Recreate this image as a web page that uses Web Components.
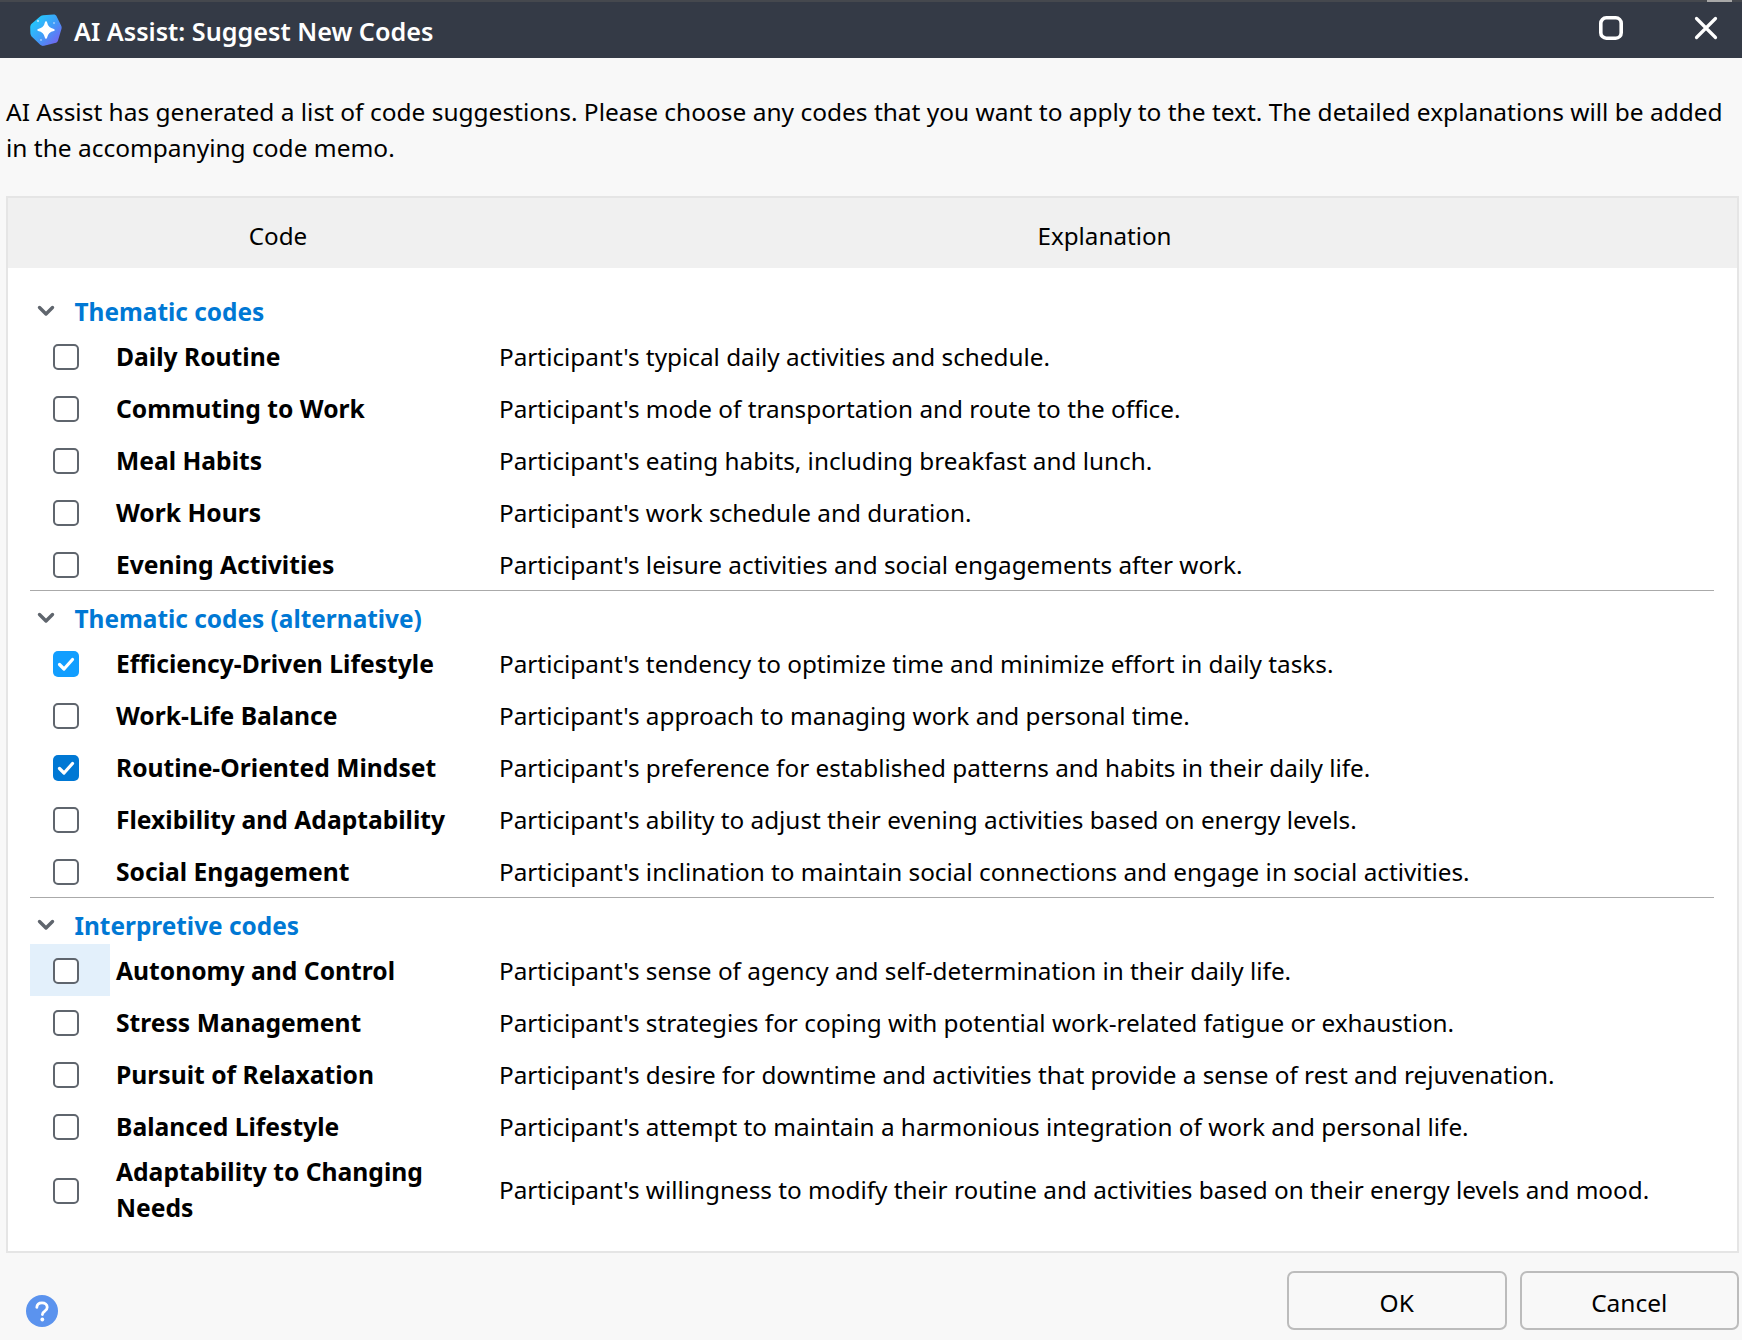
<!DOCTYPE html>
<html lang="en"><head><meta charset="utf-8"><title>AI Assist: Suggest New Codes</title>
<style>html,body{margin:0;padding:0;background:#f8f8f8}body{font:24.47px/36px "Noto Sans","Liberation Sans",sans-serif;color:#000}</style>
</head><body>
<template id="t-dialog"><style>
:host{display:flex;flex-direction:column;width:1742px;height:1340px;overflow:hidden;background:#f8f8f8}
.intro{padding:35.5px 0 0 6px;width:1730px;height:138px;box-sizing:border-box}
.foot{display:flex;align-items:flex-start;justify-content:space-between;padding:18px 3px 0 26px}
.btns{display:flex;gap:13px}
.help{width:32px;height:32px;margin-top:24px;flex:none}
</style>
<slot name="title"></slot>
<div class="intro"><slot name="intro"></slot></div>
<slot></slot>
<div class="foot"><svg class="help" viewBox="0 0 32 32"><circle cx="16" cy="16" r="16" fill="#5b93ee"/><path d="M10.800 12.300c.2-3 2.400-4.400 5.200-4.400 3 0 5.200 1.600 5.200 4.300 0 2-1 3-2.500 4-1.600 1-2.300 1.700-2.300 3.400" fill="none" stroke="#fff" stroke-width="2.800" stroke-linecap="round"/><circle cx="16.300" cy="24.500" r="1.900" fill="#fff"/></svg><div class="btns"><slot name="buttons"></slot></div></div>
</template>

<template id="t-titlebar"><style>
:host{display:flex;align-items:center;height:58px;box-sizing:border-box;flex:none;background:#343a46;border-top:2px solid #45484e;color:#fff;padding-left:30px;position:relative}
:host::after{content:"";position:absolute;top:-2px;right:10px;width:25px;height:2px;background:#a8a8a8}
.ic{width:32px;height:32px;flex:none;margin-right:12px}
.t{font-weight:600;font-size:25.2px;line-height:32px;flex:1;position:relative;top:1px}
.ctl{display:flex;align-items:center;gap:70.5px;margin-right:24.5px}
.ctl svg{position:relative;top:-2px}
</style>
<svg class="ic" viewBox="0 0 32 32"><defs><linearGradient id="g" x1=".05" y1=".1" x2=".95" y2=".95"><stop offset="0" stop-color="#1fd0fc"/><stop offset=".5" stop-color="#3e9ef8"/><stop offset="1" stop-color="#7b5bef"/></linearGradient></defs><path d="M13 1.200 23.500 .6c1.500 0 2.500.6 3.200 1.800l4.400 9c.7 1.300.7 2.600.2 4l-3.300 11c-.5 1.500-1.500 2.300-3 2.700l-11 2.700c-1.400.3-2.700 0-3.800-1L2.400 23.300C1.200 22.200.6 21 .4 19.500L.2 13.500c0-1.500.4-2.700 1.400-3.800L9.500 3c1-1 2.200-1.600 3.500-1.800z" fill="url(#g)"/><path d="M16 8.300c.9 4.700 2.900 6.800 7.700 7.700-4.800.9-6.800 3-7.700 7.700-.9-4.700-2.900-6.800-7.700-7.700 4.800-.9 6.800-3 7.700-7.700z" fill="#fff" stroke="#fff" stroke-width="2" stroke-linejoin="round"/><circle cx="8" cy="7" r=".9" fill="#d8f3ff"/><circle cx="24" cy="9" r=".7" fill="#fff"/><circle cx="11" cy="26" r=".7" fill="#fff"/></svg>
<div class="t"><slot></slot></div>
<div class="ctl"><svg width="24" height="24" viewBox="0 0 24 24"><rect x="1.800" y="1.800" width="20.400" height="20.400" rx="5.500" fill="none" stroke="#fff" stroke-width="3.600"/></svg><svg width="24" height="24" viewBox="0 0 24 24"><path d="M2.500 2.500 21.500 21.500M21.500 2.500 2.500 21.500" stroke="#fff" stroke-width="3.200" stroke-linecap="round"/></svg></div>
</template>

<template id="t-table"><style>
:host{display:block;margin:0 3px 0 6px;box-sizing:border-box;height:1057px;flex:none;background:#fff;border:2px solid #e5e5e5}
.h{display:grid;grid-template-columns:540px 1fr;height:70px;background:#f0f0f0;align-items:center;text-align:center;font-size:24.2px}
.h span{padding-top:6px}
.h span:last-child{padding-right:76px}
.b{padding:16px 23px 0 22px}
</style><div class="h"><span>Code</span><span>Explanation</span></div><div class="b"><slot></slot></div></template>

<template id="t-group"><style>
:host{display:block;border-bottom:1px solid #aaa}
:host([last]){border-bottom:0}
.g{display:flex;align-items:center;height:46px;box-sizing:border-box;padding-top:8px}
svg{width:18px;height:12px;margin:0 19.500px 0 7px;flex:none}
.n{color:#0078d4;font-weight:700;font-size:24.4px;line-height:34px;padding-top:2px}
</style><div class="g"><svg viewBox="0 0 18 12"><path d="M2.500 2.500 9 9 15.500 2.500" fill="none" stroke="#5f656d" stroke-width="3.400" stroke-linecap="round" stroke-linejoin="round"/></svg><span class="n"><slot name="name"></slot></span></div><slot></slot></template>

<template id="t-row"><style>
:host{display:grid;grid-template-columns:80px 389px 1fr;min-height:52px;align-items:center;font-size:24.3px}
.c{display:flex;align-self:stretch;align-items:center;justify-content:center;padding:2px 8px 0 0;box-sizing:border-box}
:host([hl]) .c{background:#e3f0fb}
.n{font-weight:700;font-size:24.65px;padding:1px 0 0 6px;line-height:36px}
.e{white-space:nowrap;padding-top:1px}
:host([tall]) .n{padding-top:2px}
:host([tall]) .c{padding-top:3px}
</style><div class="c"><code-check></code-check></div><div class="n"><slot name="name"></slot></div><div class="e"><slot></slot></div></template>

<template id="t-check"><style>
:host{display:block;width:26px;height:26px;box-sizing:border-box;border:2px solid #5f656d;border-radius:5px;background:#fff}
:host([on]){border:0;background:#0078d4}
:host([on="hover"]){background:#129eff}
svg{display:none;width:26px;height:26px}
:host([on]) svg{display:block}
</style><svg viewBox="0 0 26 26"><path d="M6.500 13.500 11 18 19.500 8.500" fill="none" stroke="#fff" stroke-width="3.200" stroke-linecap="round" stroke-linejoin="round"/></svg></template>

<template id="t-btn"><style>
:host{display:flex;align-items:center;justify-content:center;width:219.500px;height:59px;box-sizing:border-box;border:2px solid #bcbcbc;border-radius:7px;background:#f8f8f8;padding-top:4px}
</style><slot></slot></template>

<script>
function def(tag,tpl,extra){customElements.define(tag,class extends HTMLElement{constructor(){super();this.attachShadow({mode:'open'}).append(document.getElementById(tpl).content.cloneNode(true))}
 connectedCallback(){if(extra)extra(this)}})}
def('code-check','t-check');
def('code-row','t-row',el=>{const c=el.shadowRoot.querySelector('code-check');if(el.hasAttribute('checked'))c.setAttribute('on',el.getAttribute('checked'))});
def('code-group','t-group');
def('code-table','t-table');
def('title-bar','t-titlebar');
def('dialog-button','t-btn');
def('suggest-dialog','t-dialog');
</script>

<suggest-dialog>
<title-bar slot="title">AI Assist: Suggest New Codes</title-bar>
<span slot="intro">AI Assist has generated a list of code suggestions. Please choose any codes that you want to apply to the text. The detailed explanations will be added in the accompanying code memo.</span>
<code-table>
<code-group><span slot="name">Thematic codes</span>
<code-row><span slot="name">Daily Routine</span>Participant's typical daily activities and schedule.</code-row>
<code-row><span slot="name">Commuting to Work</span>Participant's mode of transportation and route to the office.</code-row>
<code-row><span slot="name">Meal Habits</span>Participant's eating habits, including breakfast and lunch.</code-row>
<code-row><span slot="name">Work Hours</span>Participant's work schedule and duration.</code-row>
<code-row><span slot="name">Evening Activities</span>Participant's leisure activities and social engagements after work.</code-row>
</code-group>
<code-group><span slot="name">Thematic codes (alternative)</span>
<code-row checked="hover"><span slot="name">Efficiency-Driven Lifestyle</span>Participant's tendency to optimize time and minimize effort in daily tasks.</code-row>
<code-row><span slot="name">Work-Life Balance</span>Participant's approach to managing work and personal time.</code-row>
<code-row checked="on"><span slot="name">Routine-Oriented Mindset</span>Participant's preference for established patterns and habits in their daily life.</code-row>
<code-row><span slot="name">Flexibility and Adaptability</span>Participant's ability to adjust their evening activities based on energy levels.</code-row>
<code-row><span slot="name">Social Engagement</span>Participant's inclination to maintain social connections and engage in social activities.</code-row>
</code-group>
<code-group last><span slot="name">Interpretive codes</span>
<code-row hl><span slot="name">Autonomy and Control</span>Participant's sense of agency and self-determination in their daily life.</code-row>
<code-row><span slot="name">Stress Management</span>Participant's strategies for coping with potential work-related fatigue or exhaustion.</code-row>
<code-row><span slot="name">Pursuit of Relaxation</span>Participant's desire for downtime and activities that provide a sense of rest and rejuvenation.</code-row>
<code-row><span slot="name">Balanced Lifestyle</span>Participant's attempt to maintain a harmonious integration of work and personal life.</code-row>
<code-row tall><span slot="name">Adaptability to Changing Needs</span>Participant's willingness to modify their routine and activities based on their energy levels and mood.</code-row>
</code-group>
</code-table>
<dialog-button slot="buttons">OK</dialog-button>
<dialog-button slot="buttons">Cancel</dialog-button>
</suggest-dialog>
</body></html>
